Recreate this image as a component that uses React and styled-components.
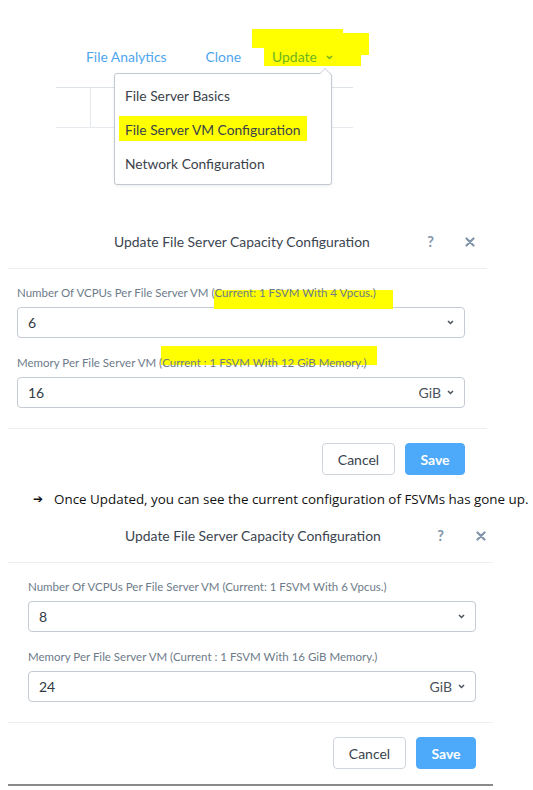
import React from 'react';
import styled, { createGlobalStyle } from 'styled-components';

const Global = createGlobalStyle`
  html, body { margin: 0; padding: 0; background: #fff; }
  body { font-family: Lato, "Open Sans", sans-serif; color: #3a434d; }
  * { box-sizing: border-box; }
`;

const Page = styled.div`
  width: 533px;
  height: 790px;
  overflow: hidden;
`;

const TopArea = styled.div`
  position: relative;
  height: 222px;
  padding-top: 48px;
`;

const Highlighter = styled.div`
  position: absolute;
  background: #ffff00;
`;

const NavRow = styled.nav`
  position: relative;
  display: flex;
  align-items: center;
  height: 18px;
  margin-left: 86px;
`;

const NavLink = styled.span`
  display: inline-flex;
  align-items: center;
  gap: 9px;
  font-size: 13.9px;
  line-height: 18px;
  color: ${p => p.$color || '#4ea6ee'};
  margin-right: ${p => p.$gap || 0}px;
`;

const TableStub = styled.div`
  display: flex;
  width: 297px;
  height: 41px;
  margin: 21px 0 0 56px;
  border-top: 1px solid #dde2e8;
  border-bottom: 1px solid #e6eaee;
`;

const StubCell = styled.div`
  width: 35px;
  border-right: 1px solid #e3e7ec;
`;

const Menu = styled.ul`
  position: absolute;
  left: 114px;
  top: 73px;
  width: 218px;
  height: 112px;
  margin: 0;
  padding: 5px 0 0;
  list-style: none;
  background: #fff;
  border: 1px solid #c3c9d1;
  border-radius: 3px;
  box-shadow: 0 1px 3px rgba(0, 0, 0, 0.08);
  &::before {
    content: '';
    position: absolute;
    top: -6px;
    right: 0px;
    border-left: 6px solid transparent;
    border-right: 6px solid transparent;
    border-bottom: 6px solid #c3c9d1;
  }
  &::after {
    content: '';
    position: absolute;
    top: -5px;
    right: 1px;
    border-left: 5px solid transparent;
    border-right: 5px solid transparent;
    border-bottom: 5px solid #fff;
  }
`;

const MenuItem = styled.li`
  position: relative;
  z-index: 0;
  height: 34px;
  line-height: 34px;
  padding-left: 10px;
  font-size: 13.8px;
  color: #3b424a;
`;

const Mark = styled.span`
  position: relative;
  &::before {
    content: '';
    position: absolute;
    z-index: -1;
    background: #ffff00;
    top: ${p => p.$t}px;
    bottom: ${p => p.$b}px;
    left: ${p => p.$l}px;
    right: ${p => p.$r}px;
  }
`;

const Dialog = styled.section`
  width: ${p => p.$w}px;
  margin: ${p => p.$mt}px 0 0 8px;
`;

const Header = styled.header`
  display: flex;
  align-items: flex-start;
  height: 47px;
  padding: 12px ${p => p.$pr}px 0 ${p => p.$pl}px;
  border-bottom: 1px solid #eceff2;
`;

const Title = styled.h2`
  margin: 0;
  flex: 1;
  font-size: 13.9px;
  line-height: 16px;
  font-weight: 400;
  color: #3b4550;
  white-space: nowrap;
`;

const HeaderIcons = styled.div`
  display: flex;
  align-items: center;
  gap: ${p => p.$gap}px;
  height: 16px;
  color: #8294aa;
  font-weight: 700;
`;

const Help = styled.span`
  font-size: 14.5px;
  line-height: 16px;
`;

const Body = styled.div`
  padding: 17px ${p => p.$pr}px 20px ${p => p.$pl}px;
`;

const Field = styled.div`
  & + & {
    margin-top: 18px;
  }
`;

const Label = styled.label`
  display: block;
  position: relative;
  z-index: 0;
  font-size: 11.5px;
  line-height: 14px;
  color: #6d7b8a;
  margin-bottom: 7px;
  white-space: nowrap;
`;

const Select = styled.div`
  display: flex;
  align-items: center;
  height: 31px;
  padding: 0 10px 0 10px;
  border: 1px solid #c4cbd4;
  border-radius: 4px;
  font-size: 14px;
  color: #333a42;
`;

const Value = styled.span`
  flex: 1;
`;

const Unit = styled.span`
  display: inline-flex;
  align-items: center;
  gap: 6px;
  color: #4a535c;
`;

const Footer = styled.footer`
  display: flex;
  justify-content: flex-end;
  gap: 10px;
  padding: 14px ${p => p.$pr}px 10px 0;
  border-top: 1px solid #eceff2;
`;

const Button = styled.button`
  height: 32px;
  width: ${p => p.$w}px;
  border-radius: 4px;
  font-family: Lato, "Open Sans", sans-serif;
  font-size: 14px;
  cursor: pointer;
  border: 1px solid ${p => (p.$primary ? '#4da9f9' : '#cfd5dc')};
  background: ${p => (p.$primary ? '#4da9f9' : '#fff')};
  color: ${p => (p.$primary ? '#fff' : '#3a434d')};
  font-weight: ${p => (p.$primary ? 700 : 400)};
`;

const Note = styled.p`
  display: flex;
  align-items: center;
  margin: 4px 0 0 33px;
  height: 20px;
  font-family: "Open Sans", sans-serif;
  font-size: 13.4px;
  color: #111;
  white-space: nowrap;
`;

const Arrow = styled.span`
  font-family: "DejaVu Sans", sans-serif;
  font-size: 12px;
  width: 21px;
`;

const BottomRule = styled.div`
  width: 485px;
  height: 2px;
  margin: 5px 0 0 8px;
  background: #8a8a8a;
`;

const Chevron = ({ color = '#4a535c' }) => (
  <svg width="7" height="5" viewBox="0 0 7 5">
    <polyline points="1,1 3.5,3.5 6,1" fill="none" stroke={color} strokeWidth="1.5" />
  </svg>
);

const CloseIcon = () => (
  <svg width="10" height="10" viewBox="0 0 10 10">
    <path d="M1.5 1.5 L8.5 8.5 M8.5 1.5 L1.5 8.5" stroke="#8294aa" strokeWidth="2.2" strokeLinecap="round" />
  </svg>
);

function CapacityDialog({ w, mt, hpl, hpr, iconGap, bpl, bpr, cpu, cpuCurrent, mem, memCurrent, marks }) {
  return (
    <Dialog $w={w} $mt={mt}>
      <Header $pl={hpl} $pr={hpr}>
        <Title>Update File Server Capacity Configuration</Title>
        <HeaderIcons $gap={iconGap}>
          <Help>?</Help>
          <CloseIcon />
        </HeaderIcons>
      </Header>
      <Body $pl={bpl} $pr={bpr}>
        <Field>
          <Label>
            Number Of VCPUs Per File Server VM (
            {marks ? (
              <Mark $t={4} $b={-10} $l={-1} $r={-17}>{`Current: 1 FSVM With ${cpuCurrent} Vpcus.)`}</Mark>
            ) : (
              `Current: 1 FSVM With ${cpuCurrent} Vpcus.)`
            )}
          </Label>
          <Select>
            <Value>{cpu}</Value>
            <Chevron />
          </Select>
        </Field>
        <Field>
          <Label>
            Memory Per File Server VM (
            {marks ? (
              <Mark $t={-10} $b={4} $l={-1} $r={-10}>{`Current : 1 FSVM With ${memCurrent} GiB Memory.)`}</Mark>
            ) : (
              `Current : 1 FSVM With ${memCurrent} GiB Memory.)`
            )}
          </Label>
          <Select>
            <Value>{mem}</Value>
            <Unit>
              GiB <Chevron />
            </Unit>
          </Select>
        </Field>
      </Body>
      <Footer $pr={bpr}>
        <Button $w={73}>Cancel</Button>
        <Button $w={60} $primary>Save</Button>
      </Footer>
    </Dialog>
  );
}

export default function App() {
  return (
    <Page>
      <Global />
      <TopArea>
        <Highlighter style={{ left: 252, top: 29, width: 91, height: 19 }} />
        <Highlighter style={{ left: 264, top: 33, width: 105, height: 22 }} />
        <Highlighter style={{ left: 264, top: 40, width: 97, height: 26 }} />
        <NavRow>
          <NavLink $gap={39}>File Analytics</NavLink>
          <NavLink $gap={31}>Clone</NavLink>
          <NavLink $color="#6fb51f">
            Update <Chevron color="#6fb51f" />
          </NavLink>
        </NavRow>
        <TableStub>
          <StubCell />
        </TableStub>
        <Menu>
          <MenuItem>File Server Basics</MenuItem>
          <MenuItem>
            <Mark $t={-5} $b={-3} $l={-6} $r={-6}>File Server VM Configuration</Mark>
          </MenuItem>
          <MenuItem>Network Configuration</MenuItem>
        </Menu>
      </TopArea>

      <CapacityDialog
        w={479}
        mt={0}
        hpl={106}
        hpr={12}
        iconGap={31}
        bpl={9}
        bpr={22}
        cpu="6"
        cpuCurrent="4"
        mem="16"
        memCurrent="12"
        marks
      />

      <Note>
        <Arrow>➔</Arrow>
        Once Updated, you can see the current configuration of FSVMs has gone up.
      </Note>

      <CapacityDialog
        w={485}
        mt={7}
        hpl={117}
        hpr={7}
        iconGap={32}
        bpl={20}
        bpr={17}
        cpu="8"
        cpuCurrent="6"
        mem="24"
        memCurrent="16"
      />
      <BottomRule />
    </Page>
  );
}
